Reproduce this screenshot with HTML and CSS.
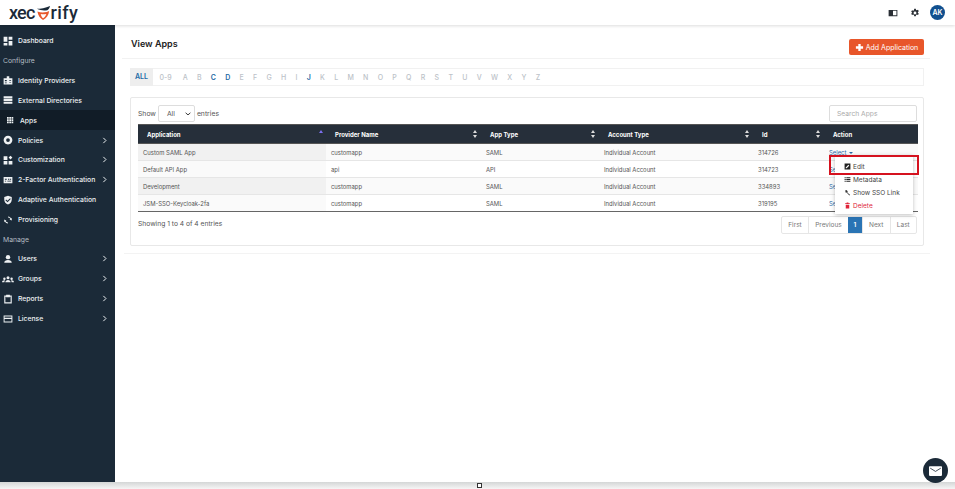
FILE: index.html
```html
<!DOCTYPE html>
<html lang="en">
<head>
    <meta charset="UTF-8">
    <meta name="viewport" content="width=device-width, initial-scale=1.0">
    <title>View Apps</title>
    <link rel="stylesheet" href="styles.css">
</head>
<body>
    <svg class="sprite" width="0" height="0">
        <symbol id="i-dash" viewBox="0 0 16 16"><path d="M1 1h6v8H1zM9 1h6v5H9zM1 11h6v4H1zM9 8h6v7H9z"/></symbol>
        <symbol id="i-idp" viewBox="0 0 16 16"><path fill-rule="evenodd" d="M1 5h5V2h4v3h5v10H1zM3 8v2h3V8zm7 0v1h3V8zm0 3v1h3v-1zm-7 1v1h3v-1z"/></symbol>
        <symbol id="i-dir" viewBox="0 0 16 16"><path d="M1 2h14v3.400H1zM1 6.400h14v3.200H1zM1 10.800h14V14H1z"/></symbol>
        <symbol id="i-grid" viewBox="0 0 16 16"><path d="M2 2h3.500v3.500H2zM6.500 2H10v3.500H6.500zM11 2h3.500v3.500H11zM2 6.500h3.500V10H2zM6.500 6.500H10V10H6.500zM11 6.500h3.500V10H11zM2 11h3.500v3.500H2zM6.500 11H10v3.500H6.500zM11 11h3.500v3.500H11z"/></symbol>
        <symbol id="i-policy" viewBox="0 0 16 16"><path fill-rule="evenodd" d="M8 1a7 7 0 0 1 7 7c0 3-2 5.500-4 6.500L8 15l-3-.5C3 13.500 1 11 1 8a7 7 0 0 1 7-7zm0 4a3 3 0 1 0 0 6 3 3 0 0 0 0-6z"/></symbol>
        <symbol id="i-custom" viewBox="0 0 16 16"><path d="M1 2h6v6H1zM9 4l3-3 3 3-3 3zM1 9.500h6V15H1zM9 9.500h6V15H9z"/></symbol>
        <symbol id="i-2fa" viewBox="0 0 16 16"><path fill-rule="evenodd" d="M1 3h14v10H1zM3 6v1.500h3V6zm5 0v1.500h2V6zm3 0v1.500h2V6zM3 9v1.500h2V9zm4 0v1.500h6V9z"/></symbol>
        <symbol id="i-shield" viewBox="0 0 16 16"><path fill-rule="evenodd" d="M8 1l6 2.200v4.300c0 3.500-2.500 6.300-6 7.500-3.500-1.200-6-4-6-7.500V3.200zm3.300 4.200L7.200 9.300 5 7.200 3.900 8.300l3.300 3.200 5.200-5.200z"/></symbol>
        <symbol id="i-sync" viewBox="0 0 16 16"><path d="M8 2.500a5.500 5.500 0 0 1 5 3.200l1.300-.9-.4 4-3.500-1.800 1.300-.7A4 4 0 0 0 8 4zM8 13.500A5.500 5.500 0 0 1 3 10.300l-1.300.9.4-4 3.500 1.800-1.300.7A4 4 0 0 0 8 12z"/></symbol>
        <symbol id="i-user" viewBox="0 0 16 16"><circle cx="8" cy="5" r="3.500"/><path d="M2 14c0-3 2.500-4.500 6-4.500s6 1.500 6 4.500z"/></symbol>
        <symbol id="i-users" viewBox="0 0 20 16"><circle cx="10" cy="6" r="2.500"/><circle cx="4" cy="7.500" r="2"/><circle cx="16" cy="7.500" r="2"/><path d="M5.500 13.500c0-2.500 2-4 4.500-4s4.500 1.500 4.500 4zM0 13.500c0-2 1.500-3.500 4-3.500l1 .5c-.6.800-1 1.800-1 3zM20 13.500c0-2-1.500-3.500-4-3.500l-1 .5c.6.800 1 1.800 1 3z"/></symbol>
        <symbol id="i-clip" viewBox="0 0 16 16"><path fill-rule="evenodd" d="M2 2.500h3V1h6v1.500h3V15H2zM3.800 4.300v9h8.400v-9H11V5H5v-.7z"/></symbol>
        <symbol id="i-card" viewBox="0 0 16 16"><path fill-rule="evenodd" d="M1 2.500h14v11H1zM2.500 4v1.800h11V4zm0 4v4h11V8z"/></symbol>
        <symbol id="i-chev" viewBox="0 0 8 12"><path d="M2 1.500L6.500 6 2 10.500" fill="none" stroke="currentColor" stroke-width="1.700"/></symbol>
    </svg>

    <header class="topbar">
        <div class="logo">
            <span class="logo-xec">xec</span>
            <svg class="logo-mark" viewBox="0 0 18 18">
                <path d="M2 5c4 0 9-1 14-3-.5 2-1.500 3.500-3 4.500-3 .5-7 .5-11-1.500z" fill="#1b2a38"/>
                <path d="M2.500 8c3 1 6 1.200 10 .5l2.500-1c-.5 4.500-3 8-6.500 9.500C5.500 15.500 3.300 12 2.500 8z" fill="#e8592b"/>
                <path d="M6 10.500c2 .5 4 .5 6 0-.6 2-1.800 3.500-3.500 4.500-1.200-1-2-2.500-2.500-4.500z" fill="#fff"/>
            </svg>
            <span class="logo-rify">rify</span>
        </div>
        <div class="top-actions">
            <svg class="top-icon book" viewBox="0 0 16 16"><path fill-rule="evenodd" d="M1 3h14v10H1zm7 1.500v7h5.500v-7z"/></svg>
            <svg class="top-icon" viewBox="0 0 16 16"><path fill-rule="evenodd" d="M6.700 1h2.600l.4 2 1.200.6 1.900-.8 1.300 2.300-1.500 1.300v1.300l1.500 1.300-1.300 2.300-1.900-.8-1.200.6-.4 2H6.700l-.4-2-1.200-.6-1.900.8-1.300-2.300 1.500-1.300V7.100L1.900 5.800l1.300-2.300 1.900.8 1.200-.6zM8 5.700a2.300 2.300 0 1 0 0 4.600 2.300 2.300 0 0 0 0-4.600z"/></svg>
            <span class="avatar">AK</span>
        </div>
    </header>

    <div class="layout">
        <nav class="sidebar">
            <a class="nav-item"><svg class="nav-icon"><use href="#i-dash"/></svg>Dashboard</a>
            <div class="nav-label">Configure</div>
            <a class="nav-item"><svg class="nav-icon"><use href="#i-idp"/></svg>Identity Providers</a>
            <a class="nav-item"><svg class="nav-icon"><use href="#i-dir"/></svg>External Directories</a>
            <a class="nav-item active"><svg class="nav-icon"><use href="#i-grid"/></svg>Apps</a>
            <a class="nav-item"><svg class="nav-icon"><use href="#i-policy"/></svg>Policies<svg class="chev"><use href="#i-chev"/></svg></a>
            <a class="nav-item"><svg class="nav-icon"><use href="#i-custom"/></svg>Customization<svg class="chev"><use href="#i-chev"/></svg></a>
            <a class="nav-item"><svg class="nav-icon"><use href="#i-2fa"/></svg>2-Factor Authentication<svg class="chev"><use href="#i-chev"/></svg></a>
            <a class="nav-item"><svg class="nav-icon"><use href="#i-shield"/></svg>Adaptive Authentication</a>
            <a class="nav-item"><svg class="nav-icon"><use href="#i-sync"/></svg>Provisioning</a>
            <div class="nav-label">Manage</div>
            <a class="nav-item"><svg class="nav-icon"><use href="#i-user"/></svg>Users<svg class="chev"><use href="#i-chev"/></svg></a>
            <a class="nav-item"><svg class="nav-icon wide"><use href="#i-users"/></svg>Groups<svg class="chev"><use href="#i-chev"/></svg></a>
            <a class="nav-item"><svg class="nav-icon"><use href="#i-clip"/></svg>Reports<svg class="chev"><use href="#i-chev"/></svg></a>
            <a class="nav-item"><svg class="nav-icon"><use href="#i-card"/></svg>License<svg class="chev"><use href="#i-chev"/></svg></a>
        </nav>

        <main class="content">
            <div class="page-head">
                <h2>View Apps</h2>
                <button class="btn-add"><svg viewBox="0 0 10 10"><path d="M3.700 1h2.600v2.700H9v2.600H6.300V9H3.700V6.300H1V3.700h2.700z"/></svg>Add Application</button>
            </div>

            <div class="alpha-bar">
                <a class="current">ALL</a><a>0-9</a><a>A</a><a>B</a><a class="has">C</a><a class="has">D</a><a>E</a><a>F</a><a>G</a><a>H</a><a>I</a><a class="has">J</a><a>K</a><a>L</a><a>M</a><a>N</a><a>O</a><a>P</a><a>Q</a><a>R</a><a>S</a><a>T</a><a>U</a><a>V</a><a>W</a><a>X</a><a>Y</a><a>Z</a>
            </div>

            <section class="card">
                <div class="table-top">
                    <div class="show">Show <span class="fake-select">All<svg viewBox="0 0 10 6"><path d="M1 1l4 3.500L9 1" fill="none" stroke="#333" stroke-width="1.600"/></svg></span> entries</div>
                    <input class="search" type="text" placeholder="Search Apps">
                </div>

                <table>
                    <thead>
                        <tr>
                            <th class="col-app">Application<span class="sort asc"></span></th>
                            <th class="col-prov">Provider Name<span class="sort"></span></th>
                            <th class="col-type">App Type<span class="sort"></span></th>
                            <th class="col-acc">Account Type<span class="sort"></span></th>
                            <th class="col-id">Id<span class="sort"></span></th>
                            <th>Action</th>
                        </tr>
                    </thead>
                    <tbody>
                        <tr>
                            <td class="sorted">Custom SAML App</td><td>customapp</td><td>SAML</td><td>Individual Account</td><td>314726</td>
                            <td class="action-cell">
                                <a class="select-link">Select <i class="caret"></i></a>
                                <div class="menu">
                                    <a class="menu-item hl"><svg viewBox="0 0 12 12"><path fill-rule="evenodd" d="M1 1h10v10H1zm2 6.500V9h1.500L9 4.500 7.500 3z" fill="#222"/></svg>Edit</a>
                                    <a class="menu-item"><svg viewBox="0 0 12 12"><path d="M1 2h2v2H1zM4 2h7v2H4zM1 5h2v2H1zM4 5h7v2H4zM1 8h2v2H1zM4 8h7v2H4z" fill="#222"/></svg>Metadata</a>
                                    <a class="menu-item"><svg viewBox="0 0 12 12"><path d="M2 2.500l2-1 2.500 2.500-1 1.500L9 9l1.500 1-1 1-1.500-1-3.500-4-1.500.5z" fill="#333"/></svg>Show SSO Link</a>
                                    <a class="menu-item del"><svg viewBox="0 0 12 12"><path d="M4.500 1h3v1H10v1.500H2V2h2.500zM3 4.500h6V11H3z" fill="#e0243a"/></svg>Delete</a>
                                </div>
                            </td>
                        </tr>
                        <tr>
                            <td class="sorted">Default API App</td><td>api</td><td>API</td><td>Individual Account</td><td>314723</td>
                            <td><a class="select-link">Select <i class="caret"></i></a></td>
                        </tr>
                        <tr>
                            <td class="sorted">Development</td><td>customapp</td><td>SAML</td><td>Individual Account</td><td>334893</td>
                            <td><a class="select-link">Select <i class="caret"></i></a></td>
                        </tr>
                        <tr>
                            <td class="sorted">JSM-SSO-Keycloak-2fa</td><td>customapp</td><td>SAML</td><td>Individual Account</td><td>319195</td>
                            <td><a class="select-link">Select <i class="caret"></i></a></td>
                        </tr>
                    </tbody>
                </table>

                <div class="table-foot">
                    <div class="info">Showing 1 to 4 of 4 entries</div>
                    <div class="pager">
                        <a>First</a><a>Previous</a><a class="on">1</a><a>Next</a><a>Last</a>
                    </div>
                </div>
            </section>
            <div class="rule"></div>
        </main>
    </div>

    <div class="bottom-strip"><span class="handle"></span></div>
    <button class="chat"><svg viewBox="0 0 16 12"><path d="M1 0h14a1 1 0 0 1 1 1v10a1 1 0 0 1-1 1H1a1 1 0 0 1-1-1V1a1 1 0 0 1 1-1z" fill="#fff"/><path d="M1.500 2.500L8 6.500l6.500-4" fill="none" stroke="#1b2a38" stroke-width="1"/></svg></button>
</body>
</html>
```

FILE: styles.css
```css
*, *::before, *::after {
    box-sizing: border-box;
}
html, body {
    height: 100%;
}
body {
    font-family: Inter, "Liberation Sans", sans-serif;
    font-size: 7px;
    color: #444;
    background-color: #fff;
    margin: 0;
    display: flex;
    flex-direction: column;
    overflow: hidden;
}
.sprite {
    position: absolute;
}
.topbar {
    height: 25px;
    flex: none;
    background: #fff;
    display: flex;
    align-items: center;
    justify-content: space-between;
    padding: 0 10px 0 9px;
    box-shadow: 0 1px 3px rgba(0, 0, 0, 0.14);
    position: relative;
    z-index: 2;
}
.logo {
    display: flex;
    align-items: center;
    font-family: Roboto, sans-serif;
    font-size: 18px;
    font-weight: 500;
    color: #1b2a38;
    line-height: 1;
}
.logo-xec {
    letter-spacing: -0.8px;
}
.logo-mark {
    width: 17px;
    height: 17px;
}
.logo-rify {
    margin-left: -1px;
    letter-spacing: 0.4px;
}
.top-actions {
    display: flex;
    align-items: center;
    gap: 10px;
}
.top-icon {
    width: 10px;
    height: 10px;
    fill: #2a2f35;
}
.top-icon.book {
    margin-right: 2px;
}
.avatar {
    width: 15px;
    height: 15px;
    border-radius: 50%;
    background: #11508f;
    color: #fff;
    font-size: 7px;
    font-weight: 600;
    display: flex;
    align-items: center;
    justify-content: center;
}
.layout {
    flex: 1;
    display: flex;
    min-height: 0;
}
.sidebar {
    width: 115px;
    flex: none;
    background: #1b2a38;
    color: #eef1f3;
    padding-top: 6px;
}
.nav-item {
    height: 19.900px;
    display: flex;
    align-items: center;
    padding-left: 3px;
    font-size: 6.800px;
    font-weight: 500;
    white-space: nowrap;
}
.nav-icon {
    width: 10px;
    height: 10px;
    fill: #eef1f3;
    margin-right: 5px;
    flex: none;
}
.nav-icon.wide {
    width: 12px;
    margin-left: -1px;
    margin-right: 4px;
}
.nav-item.active {
    background: #111c27;
    padding-left: 6px;
}
.nav-item.active .nav-icon {
    margin-right: 6px;
    width: 8px;
    height: 8px;
}
.nav-label {
    height: 19.500px;
    display: flex;
    align-items: center;
    padding-left: 3px;
    color: #b4bcc3;
    font-size: 6.800px;
}
.chev {
    width: 5px;
    height: 7px;
    margin-left: auto;
    margin-right: 8px;
    flex: none;
}
.content {
    flex: 1;
    min-width: 0;
    padding: 0 31px 0 15px;
}
.page-head {
    height: 34px;
    margin: 0 -6px 0 -8px;
    padding: 4px 6px 0 9px;
    display: flex;
    align-items: center;
    justify-content: space-between;
    border-bottom: 1px solid #f2f2f2;
}
.page-head h2 {
    margin: 0;
    font-size: 9px;
    font-weight: 600;
    color: #222;
}
.btn-add {
    width: 75px;
    height: 16px;
    margin-top: 7px;
    border: none;
    border-radius: 2px;
    background: #e8562a;
    color: #fff;
    font-family: inherit;
    font-size: 7px;
    display: flex;
    align-items: center;
    justify-content: center;
    gap: 2px;
    padding: 0;
}
.btn-add svg {
    width: 9px;
    height: 9px;
    fill: #fff;
}
.alpha-bar {
    height: 18px;
    margin-top: 9px;
    display: flex;
    align-items: center;
    border: 1px solid #f1f1f1;
    font-size: 7px;
    font-weight: 500;
    color: #bcc2c8;
}
.alpha-bar a {
    padding: 0 4.650px;
    text-align: center;
    flex: none;
}
.alpha-bar a:nth-child(2) {
    width: 25px;
    padding: 0;
}
.alpha-bar .current {
    width: 23px;
    height: 18px;
    margin: -1px 0 -1px -1px;
    padding: 0;
    line-height: 18px;
    background: #eee;
    color: #1f6aa5;
    font-weight: 600;
}
.alpha-bar .has {
    color: #1f6aa5;
    font-weight: 600;
}
.card {
    height: 149px;
    margin-top: 11px;
    border: 1px solid #e8e8e8;
    border-radius: 2px;
    padding: 7px 6px 0 7px;
}
.table-top {
    height: 19px;
    display: flex;
    align-items: flex-start;
    justify-content: space-between;
}
.show {
    display: flex;
    align-items: center;
    height: 17px;
    font-size: 6.800px;
    color: #555;
    gap: 2px;
}
.fake-select {
    width: 37px;
    height: 17px;
    border: 1px solid #ddd;
    border-radius: 2px;
    display: flex;
    align-items: center;
    justify-content: space-between;
    padding: 0 3px 0 8px;
    color: #555;
}
.fake-select svg {
    width: 6px;
    height: 4px;
}
.search {
    width: 88px;
    height: 17px;
    border: 1px solid #ddd;
    border-radius: 2px;
    padding: 0 7px;
    font-family: inherit;
    font-size: 6.700px;
}
.search::placeholder {
    color: #aaa;
}
table {
    width: 780px;
    table-layout: fixed;
    border-collapse: collapse;
    border-bottom: 1px solid #666;
}
th {
    height: 19px;
    background: #262f3a;
    color: #fff;
    font-size: 6px;
    font-weight: 700;
    text-align: left;
    padding: 0 9px;
    position: relative;
    border-top: 1px solid #555;
    border-bottom: 1px solid #555;
}
.col-app { width: 188px; }
.col-prov { width: 155px; }
.col-type { width: 118px; }
.col-acc { width: 154px; }
.col-id { width: 71px; }
.sort {
    position: absolute;
    right: 3px;
    top: 5px;
    width: 5px;
    height: 8px;
}
.sort::before, .sort::after {
    content: "";
    position: absolute;
    left: 0;
    border-left: 2.500px solid transparent;
    border-right: 2.500px solid transparent;
}
.sort::before {
    top: 0;
    border-bottom: 3px solid #ddd;
}
.sort::after {
    bottom: 0;
    border-top: 3px solid #ddd;
}
.sort.asc {
    right: 2px;
}
.sort.asc::before {
    border-bottom-color: #7d70f0;
}
.sort.asc::after {
    display: none;
}
td {
    height: 17px;
    padding: 0 5px;
    font-size: 5.900px;
    color: #555;
    border-bottom: 1px solid #e6e6e6;
    white-space: nowrap;
}
tbody tr:nth-child(odd) td {
    background: #fafafa;
}
tbody tr:nth-child(even) td {
    background: #fff;
}
tbody tr:nth-child(odd) td.sorted {
    background: #f1f1f1;
}
tbody tr:nth-child(even) td.sorted {
    background: #fafafa;
}
tbody tr:last-child td {
    border-bottom: none;
}
.action-cell {
    position: relative;
}
.select-link {
    color: #2a6ca8;
}
.caret {
    display: inline-block;
    margin-left: 1px;
    vertical-align: middle;
    border-left: 2px solid transparent;
    border-right: 2px solid transparent;
    border-top: 2.500px solid #2a6ca8;
}
.menu {
    position: absolute;
    left: 11px;
    top: 11px;
    width: 78px;
    height: 59px;
    background: #fff;
    padding-top: 5px;
    box-shadow: 0 1px 4px rgba(0, 0, 0, 0.25);
    z-index: 3;
}
.menu-item {
    height: 13px;
    display: flex;
    align-items: center;
    padding-left: 9px;
    font-size: 6.500px;
    color: #444;
    gap: 2px;
    position: relative;
}
.menu-item svg {
    width: 7px;
    height: 7px;
}
.menu-item.hl::after {
    content: "";
    position: absolute;
    left: -6px;
    top: -5px;
    width: 90px;
    height: 20px;
    border: 2px solid #d5121f;
}
.menu-item.del {
    color: #e0243a;
}
.table-foot {
    display: flex;
    justify-content: space-between;
    align-items: flex-start;
    padding: 4px 0 0 0;
}
.info {
    margin-top: 4px;
    color: #555;
    font-size: 6.700px;
}
.pager {
    display: flex;
    height: 18px;
    border: 1px solid #e6e6e6;
    border-radius: 2px;
    color: #777;
    font-size: 6.500px;
}
.pager a {
    display: flex;
    align-items: center;
    justify-content: center;
    padding: 0 6.250px;
    border-left: 1px solid #e6e6e6;
}
.pager a:first-child {
    border-left: none;
}
.pager .on {
    background: #2a74b4;
    color: #fff;
    border: none;
    font-weight: 600;
    padding: 0 5.500px;
}
.rule {
    height: 1px;
    margin: 7px -6px 0 -6px;
    background: #f3f3f3;
}
.bottom-strip {
    height: 7px;
    flex: none;
    background: linear-gradient(#d4d6d6, #f6f6f6);
    position: relative;
}
.handle {
    position: absolute;
    left: 477px;
    top: 1px;
    width: 5px;
    height: 5px;
    border: 1px solid #333;
    background: #fff;
}
.chat {
    position: absolute;
    right: 7px;
    bottom: 6px;
    width: 25px;
    height: 25px;
    border: none;
    border-radius: 50%;
    background: #1b2a38;
    padding: 0;
    display: flex;
    align-items: center;
    justify-content: center;
}
.chat svg {
    width: 13px;
    height: 10px;
}
```
